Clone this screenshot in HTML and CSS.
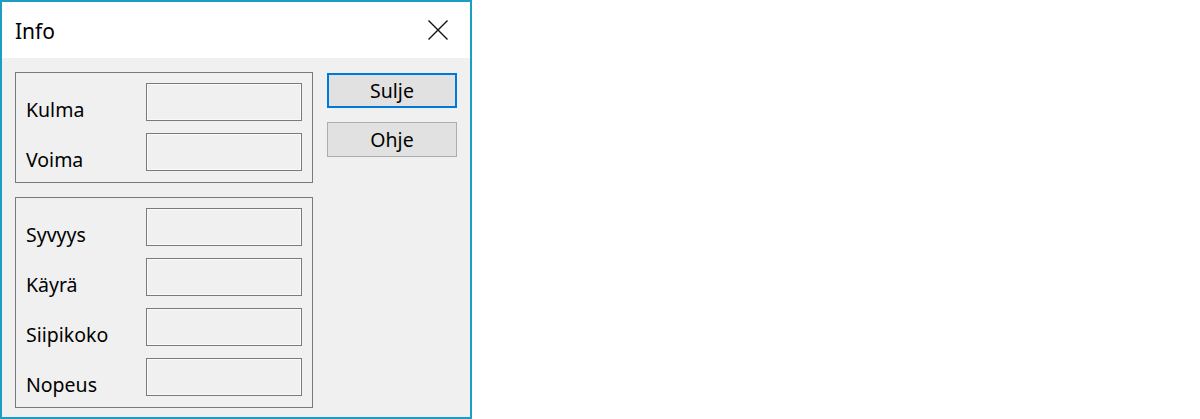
FILE: index.html
```html
<!DOCTYPE html>
<html lang="fi">
<head>
    <meta charset="UTF-8">
    <title>Info</title>
    <link rel="stylesheet" href="styles.css">
</head>
<body>
    <div class="window">
        <div class="titlebar">
            <span class="title">Info</span>
            <svg class="close" width="20" height="20" viewBox="0 0 20 20">
                <path d="M0.5 0.5 L19.5 19.5 M19.5 0.5 L0.5 19.5" stroke="#111" stroke-width="1.4" fill="none"/>
            </svg>
        </div>

        <div class="content">
            <div class="fields">
                <div class="group">
                    <div class="row"><span class="label">Kulma</span><div class="textbox"></div></div>
                    <div class="row"><span class="label">Voima</span><div class="textbox"></div></div>
                </div>
                <div class="group">
                    <div class="row"><span class="label">Syvyys</span><div class="textbox"></div></div>
                    <div class="row"><span class="label">Käyrä</span><div class="textbox"></div></div>
                    <div class="row"><span class="label">Siipikoko</span><div class="textbox"></div></div>
                    <div class="row"><span class="label">Nopeus</span><div class="textbox"></div></div>
                </div>
            </div>
            <div class="buttons">
                <button class="button default">Sulje</button>
                <button class="button">Ohje</button>
            </div>
        </div>
    </div>
</body>
</html>
```

FILE: styles.css
```css
body {
    margin: 0;
    background-color: #fff;
    font-family: "Noto Sans", "Open Sans", sans-serif;
    color: #000;
}
.window {
    width: 472px;
    height: 419px;
    box-sizing: border-box;
    border: 2px solid #1a9fc2;
    background-color: #f0f0f0;
}
.titlebar {
    height: 56px;
    background-color: #fff;
    display: flex;
    align-items: center;
    justify-content: space-between;
    padding: 0 22px 0 13px;
}
.title {
    font-size: 21px;
    margin-top: 2px;
}
.close {
    display: block;
    margin-top: -1px;
}
.content {
    display: flex;
    gap: 14px;
    padding: 14px 13px 0 13px;
}
.fields {
    display: flex;
    flex-direction: column;
    gap: 14px;
}
.group {
    width: 298px;
    box-sizing: border-box;
    border: 1px solid #7a7a7a;
    padding: 10px 10px 11px 10px;
    display: flex;
    flex-direction: column;
    gap: 12px;
}
.row {
    display: flex;
    justify-content: space-between;
    align-items: flex-end;
}
.label {
    font-size: 19.5px;
    line-height: 19px;
    margin-bottom: 2px;
}
.textbox {
    width: 156px;
    height: 38px;
    box-sizing: border-box;
    border: 1px solid #7a7a7a;
    box-shadow: inset 0 0 0 1px #fafafa;
    background-color: #f0f0f0;
}
.buttons {
    display: flex;
    flex-direction: column;
    gap: 14px;
    padding-top: 1px;
}
.button {
    width: 130px;
    height: 35px;
    box-sizing: border-box;
    background-color: #e1e1e1;
    border: 1px solid #adadad;
    font-family: "Noto Sans", "Open Sans", sans-serif;
    font-size: 19.5px;
    color: #000;
    padding: 0;
}
.button.default {
    border: 2px solid #0078d7;
}
```
